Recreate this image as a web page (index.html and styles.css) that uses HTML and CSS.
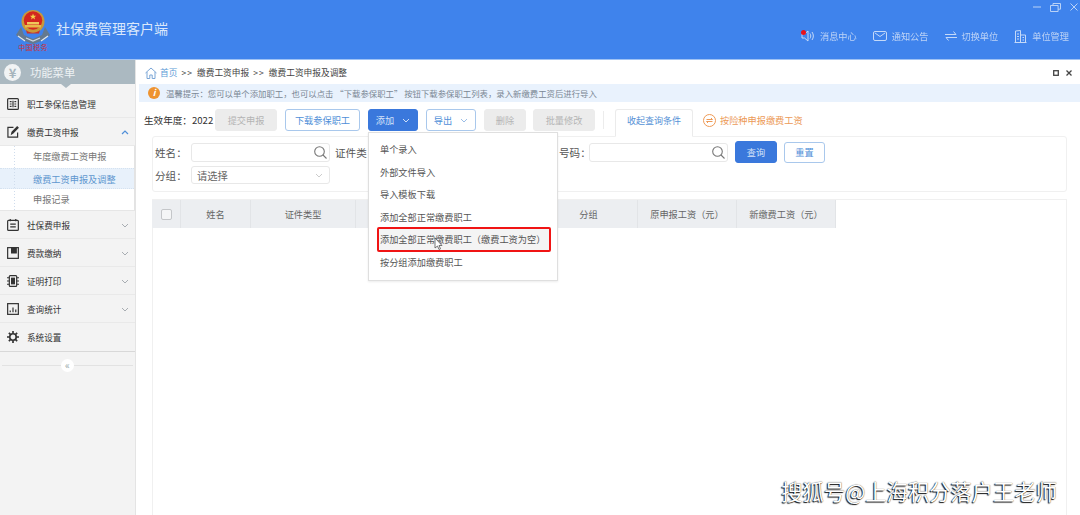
FILE: index.html
```html
<!DOCTYPE html>
<html lang="zh-CN">
<head>
<meta charset="utf-8">
<title>社保费管理客户端</title>
<link rel="stylesheet" href="styles.css">
</head>
<body>
<div class="app">
  <header class="topbar">
    <div class="brand">
      <div class="logo">
        <svg class="emblem" width="36" height="36" viewBox="0 0 36 36">
          <path d="M1 27 L6 19 L9 27 L18 31 L27 27 L30 19 L35 27 L29 32 L18 36 L7 32Z" fill="#64798f"/>
          <path d="M3 28 L10 33 M33 28 L26 33" stroke="#dfe7ef" stroke-width="1.300"/>
          <path d="M11 30l7 3 7-3" stroke="#cfd9e3" fill="none" stroke-width="1.200"/>
          <circle cx="18" cy="13.500" r="11.500" fill="#c9983a"/>
          <circle cx="18" cy="12.500" r="9.200" fill="#d3261f"/>
          <path d="M18 5.500l.9 2.200 2.300.1-1.800 1.400.7 2.200-2.100-1.300-1.900 1.300.6-2.200-1.800-1.400 2.300-.1z" fill="#f4d24a"/>
          <path d="M12 14h12v2.500H12z" fill="#f0c75a"/>
          <path d="M10 17h16v2.500H10z" fill="#e8b94a"/>
          <path d="M11 22c4 3.500 10 3.500 14 0l-1 3.500H12z" fill="#c9322a"/>
        </svg>
        <span class="seal">中国税务</span>
      </div>
      <span class="app-name">社保费管理客户端</span>
    </div>
    <div class="top-right">
      <div class="win-controls">
        <svg width="8" height="8" viewBox="0 0 8 8"><path d="M0 4h8" stroke="#b9d2f7" stroke-width="1"/></svg>
        <svg width="11" height="9" viewBox="0 0 11 9" fill="none" stroke="#b9d2f7"><path d="M.5 2.500h7.600v6H.5zM3 2.500V.5h7.500v5.700H8"/></svg>
        <svg width="8" height="8" viewBox="0 0 8 8"><path d="M.5.500l7 7M7.500 .5l-7 7" stroke="#b9d2f7"/></svg>
      </div>
      <nav class="top-nav">
        <a class="top-link msg">
          <svg width="14" height="14" viewBox="0 0 14 14" fill="none" stroke="#c4d9f8"><path d="M1 5h2.500L7 2v10L3.500 9H1zM9 4.500c1 1.500 1 3.500 0 5M11 3c1.800 2.500 1.800 5.500 0 8"/></svg>
          <i class="dot"></i>
          <span>消息中心</span>
        </a>
        <a class="top-link">
          <svg width="14" height="10" viewBox="0 0 14 10" fill="none" stroke="#c4d9f8"><rect x=".5" y=".5" width="13" height="9" rx="1.500"/><path d="M2 2l5 3.500L12 2"/></svg>
          <span>通知公告</span>
        </a>
        <a class="top-link">
          <svg width="12" height="10" viewBox="0 0 12 10" fill="none" stroke="#c4d9f8"><path d="M0 3.500h11L8.500.5M12 6.500H1L3.500 9.500"/></svg>
          <span>切换单位</span>
        </a>
        <a class="top-link">
          <svg width="13" height="13" viewBox="0 0 13 13" fill="none" stroke="#c4d9f8"><path d="M.5 12.500h12M1.500 12.500V1l5-.500v12M6.500 5h5v7.500M3 4h2M3 6.500h2M3 9h2M8.500 7.500h1.500M8.500 10h1.500"/></svg>
          <span>单位管理</span>
        </a>
      </nav>
    </div>
  </header>

  <div class="body">
    <aside class="sidebar">
      <div class="menu-title">
        <span class="yen">¥</span>
        <span>功能菜单</span>
        <i class="menu-notch"></i>
      </div>
      <ul class="menu">
        <li class="menu-item">
          <svg class="mi" width="12" height="12" viewBox="0 0 13 13" fill="none" stroke="#333" stroke-width="1.300"><rect x=".7" y=".7" width="11.600" height="11.600" rx="1"/><path d="M6.500 3v7M3 4h2M3 6.500h2M3 9h2M8 4h2M8 6.500h2M8 9h2"/></svg>
          <span>职工参保信息管理</span>
        </li>
        <li class="menu-item open">
          <svg class="mi" width="12" height="12" viewBox="0 0 13 13" fill="none" stroke="#333" stroke-width="1.300"><path d="M11.500 7v5H1V1.500h6"/><path d="M5 8.500l.5-2L11 1l1 1-5.500 5.500z" fill="#333"/></svg>
          <span>缴费工资申报</span>
          <svg class="chev up" width="8" height="5" viewBox="0 0 8 5" fill="none" stroke="#4f8fd8" stroke-width="1.200"><path d="M1 4l3-3 3 3"/></svg>
        </li>
        <li class="submenu">
          <div class="sub">年度缴费工资申报</div>
          <div class="sub active">缴费工资申报及调整</div>
          <div class="sub">申报记录</div>
        </li>
        <li class="menu-item">
          <svg class="mi" width="12" height="12" viewBox="0 0 13 13" fill="none" stroke="#333" stroke-width="1.300"><rect x=".7" y="1.500" width="11.600" height="10.800" rx="1"/><path d="M3.500 0v2.500M9.500 0v2.500M3.500 5.500h6M3.500 8.500h6"/></svg>
          <span>社保费申报</span>
          <svg class="chev" width="8" height="5" viewBox="0 0 8 5" fill="none" stroke="#a8adb2"><path d="M1 1l3 3 3-3"/></svg>
        </li>
        <li class="menu-item">
          <svg class="mi" width="12" height="12" viewBox="0 0 13 13" fill="none" stroke="#333" stroke-width="1.300"><rect x=".7" y=".7" width="11.600" height="11.600"/><path d="M5 1v5.500h5V1z" fill="#333"/></svg>
          <span>费款缴纳</span>
          <svg class="chev" width="8" height="5" viewBox="0 0 8 5" fill="none" stroke="#a8adb2"><path d="M1 1l3 3 3-3"/></svg>
        </li>
        <li class="menu-item">
          <svg class="mi" width="12" height="12" viewBox="0 0 13 13" fill="none" stroke="#333" stroke-width="1.300"><rect x="2.500" y=".7" width="8" height="11.600" rx="1"/><rect x="5" y="3.500" width="3" height="6" fill="#333"/><path d="M0 3h2.500M0 6.500h2.500M0 10h2.500M10.500 3H13M10.500 6.500H13M10.500 10H13"/></svg>
          <span>证明打印</span>
          <svg class="chev" width="8" height="5" viewBox="0 0 8 5" fill="none" stroke="#a8adb2"><path d="M1 1l3 3 3-3"/></svg>
        </li>
        <li class="menu-item">
          <svg class="mi" width="12" height="12" viewBox="0 0 13 13" fill="none" stroke="#333" stroke-width="1.300"><rect x=".7" y=".7" width="11.600" height="11.600"/><path d="M3.500 10V8M6.500 10V5M9.500 10V7"/></svg>
          <span>查询统计</span>
          <svg class="chev" width="8" height="5" viewBox="0 0 8 5" fill="none" stroke="#a8adb2"><path d="M1 1l3 3 3-3"/></svg>
        </li>
        <li class="menu-item last">
          <svg class="mi" width="12" height="12" viewBox="0 0 13 13" fill="none" stroke="#333" stroke-width="1.800"><circle cx="6.500" cy="6.500" r="3.500"/><path d="M6.500 0v2.500M6.500 10.500V13M0 6.500h2.500M10.500 6.500H13M2 2l1.800 1.800M9.200 9.200L11 11M11 2L9.200 3.800M3.800 9.200L2 11"/></svg>
          <span>系统设置</span>
        </li>
      </ul>
      <div class="collapse"><span class="collapse-btn">«</span></div>
    </aside>

    <main class="main">
      <div class="crumbs">
        <div class="crumb-path">
          <svg width="12" height="12" viewBox="0 0 12 12" fill="none" stroke="#7ba6d6"><path d="M.5 6L6 1l5.500 5M2 5v6.500h2.800V8h2.400v3.500H10V5"/></svg>
          <span class="crumb-home">首页</span>
          <span class="crumb-sep">&gt;&gt;</span>
          <span>缴费工资申报</span>
          <span class="crumb-sep">&gt;&gt;</span>
          <span>缴费工资申报及调整</span>
        </div>
        <div class="page-controls">
          <svg width="6" height="6" viewBox="0 0 6 6" fill="none" stroke="#444" stroke-width="1.300"><rect x=".7" y=".7" width="4.600" height="4.600"/></svg>
          <svg width="6" height="6" viewBox="0 0 6 6" fill="none" stroke="#444" stroke-width="1.300"><path d="M.5.500l5 5M5.500 .5l-5 5"/></svg>
        </div>
      </div>
      <div class="notice">
        <span class="info">i</span>
        <span>温馨提示：您可以单个添加职工，也可以点击 “下载参保职工” 按钮下载参保职工列表，录入新缴费工资后进行导入</span>
      </div>

      <div class="toolbar">
        <span class="year">生效年度：2022</span>
        <button class="btn disabled w62">提交申报</button>
        <button class="btn outline w75 ml8">下载参保职工</button>
        <button class="btn primary split w50 ml8">添加 <svg width="8" height="5" viewBox="0 0 8 5" fill="none" stroke="#cfe0f8"><path d="M1 1l3 3 3-3"/></svg></button>
        <button class="btn outline split w50 ml8">导出 <svg width="8" height="5" viewBox="0 0 8 5" fill="none" stroke="#9bbde6"><path d="M1 1l3 3 3-3"/></svg></button>
        <button class="btn disabled w42 ml8">删除</button>
        <button class="btn disabled w62 ml7">批量修改</button>
        <i class="tool-divider"></i>
        <div class="tab">收起查询条件</div>
        <div class="tab-link">
          <svg width="13" height="13" viewBox="0 0 13 13" fill="none" stroke="#ee9a56"><circle cx="6.500" cy="6.500" r="6"/><path d="M3.500 5.500h6L8 4M9.500 7.500h-6L5 9"/></svg>
          <span>按险种申报缴费工资</span>
        </div>
      </div>

      <form class="filters">
        <div class="filter-row">
          <label class="f-label name">姓名：</label>
          <div class="input">
            <svg width="13" height="13" viewBox="0 0 13 13" fill="none" stroke="#777" stroke-width="1.100"><circle cx="5.500" cy="5.500" r="4.800"/><path d="M9 9l3.500 3.500"/></svg>
          </div>
          <label class="f-label type">证件类</label>
          <label class="f-label code">号码：</label>
          <div class="input">
            <svg width="13" height="13" viewBox="0 0 13 13" fill="none" stroke="#777" stroke-width="1.100"><circle cx="5.500" cy="5.500" r="4.800"/><path d="M9 9l3.500 3.500"/></svg>
          </div>
          <button type="button" class="btn primary query">查询</button>
          <button type="button" class="btn outline reset">重置</button>
        </div>
        <div class="filter-row second">
          <label class="f-label name">分组：</label>
          <div class="input select">
            <span>请选择</span>
            <svg width="8" height="5" viewBox="0 0 8 5" fill="none" stroke="#ccc"><path d="M1 1l3 3 3-3"/></svg>
          </div>
        </div>
      </form>

      <div class="table-wrap">
        <div class="thead">
          <div class="th"><i class="checkbox"></i></div>
          <div class="th">姓名</div>
          <div class="th">证件类型</div>
          <div class="th"></div>
          <div class="th"></div>
          <div class="th">分组</div>
          <div class="th">原申报工资（元）</div>
          <div class="th">新缴费工资（元）</div>
        </div>
      </div>

      <div class="dropdown">
        <div class="dd-item">单个录入</div>
        <div class="dd-item">外部文件导入</div>
        <div class="dd-item">导入模板下载</div>
        <div class="dd-item">添加全部正常缴费职工</div>
        <div class="dd-item marked">添加全部正常缴费职工（缴费工资为空）
          <svg class="cursor" width="9" height="14" viewBox="0 0 9 14"><path d="M1 1v10l2.500-2 1.500 3.500 1.500-.7L5 8.500h3z" fill="#fff" stroke="#555" stroke-width=".8"/></svg>
        </div>
        <div class="dd-item">按分组添加缴费职工</div>
      </div>
    </main>
  </div>
  <div class="watermark">搜狐号@上海积分落户王老师</div>
</div>
</body>
</html>
```
FILE: styles.css
```css
* { box-sizing: border-box; }
html, body { margin: 0; padding: 0; height: 100%; overflow: hidden; }
body { font-family: "Noto Sans CJK SC", "Noto Sans", sans-serif; font-size: 9.200px; color: #555; background: #fff; }
.app { position: relative; width: 1080px; height: 515px; overflow: hidden; filter: blur(.4px); }
ul { list-style: none; margin: 0; padding: 0; }
button { font-family: inherit; font-size: 9.200px; cursor: pointer; }

.topbar { height: 60px; background: #3f83ec; display: flex; justify-content: space-between; border-bottom: 1px solid #9fc2f4; }
.brand { display: flex; align-items: flex-start; padding: 8px 0 0 15px; }
.logo { width: 36px; display: flex; flex-direction: column; align-items: center; }
.emblem { display: block; }
.seal { font-size: 7px; line-height: 9px; color: #cf2f35; white-space: nowrap; font-family: "Liberation Serif", "Noto Sans CJK SC", serif; letter-spacing: .4px; }
.app-name { font-size: 14px; line-height: 20px; color: #dbe8fb; margin: 10px 0 0 5px; }
.top-right { display: flex; flex-direction: column; align-items: flex-end; }
.win-controls { display: flex; align-items: center; gap: 9px; height: 11px; margin-right: 2px; padding-top: 1px; margin-top: 1px; }
.top-nav { display: flex; align-items: center; gap: 16px; margin: 17px 11px 0 0; }
.top-link { position: relative; display: flex; align-items: center; gap: 5px; color: #bdd3f6; font-size: 9.200px; line-height: 14px; }
.top-link span { white-space: nowrap; }
.dot { position: absolute; left: 0; top: 1px; width: 5px; height: 5px; border-radius: 50%; background: #e8121c; }

.body { display: flex; height: 455px; }
.sidebar { width: 136px; flex: none; background: #f3f3f3; border-right: 1px solid #e4e4e4; }
.menu-title { position: relative; height: 24px; background: #abb9c1; color: #eef2f4; display: flex; align-items: center; gap: 9px; padding-left: 4px; font-size: 11.300px; }
.yen { width: 17px; height: 17px; border-radius: 50%; background: #f1f3f4; color: #a7b5bd; font-size: 13px; line-height: 17px; text-align: center; font-weight: 700; }
.menu-notch { position: absolute; left: 61px; top: 24px; border: 5px solid transparent; border-top: 4px solid #abb9c1; border-bottom: 0; }
.menu { padding-top: 6px; }
.menu-item { position: relative; height: 28px; display: flex; align-items: center; gap: 8px; padding-left: 7px; color: #333; font-size: 8.600px; border-bottom: 1px solid #e9e9e9; }
.menu-item.last { border-bottom: 1px solid #d8d8d8; height: 29px; }
.mi { flex: none; }
.chev { position: absolute; right: 6px; top: 12px; }
.submenu { background: #fff; height: 65px; border-bottom: 1px solid #e6e6e6; border-right: 1px solid #e3e3e3; background-image: linear-gradient(#cfdcec 50%, transparent 50%); background-size: 1px 3px; background-repeat: repeat-y; background-position: 14px 0; }
.sub { height: 21.500px; line-height: 21px; padding-left: 33px; font-size: 9.200px; color: #777; white-space: nowrap; }
.sub.active { background-color: #e8f1fb; color: #5f97cf; border-top: 1px dotted #d5e2f0; border-bottom: 1px dotted #d5e2f0; background-image: linear-gradient(#cfdcec 50%, transparent 50%); background-size: 1px 3px; background-repeat: repeat-y; background-position: 14px 0; }
.collapse { margin: 6px 2px 0; height: 14px; display: flex; justify-content: center; align-items: center; background: linear-gradient(#e2e2e2, #e2e2e2) center/100% 1px no-repeat; }
.collapse-btn { width: 13px; height: 13px; border-radius: 50%; background: #fff; color: #9aa; font-size: 10px; line-height: 11px; text-align: center; }

.main { position: relative; flex: 1; min-width: 0; background: #fff; }
.crumbs { height: 24px; display: flex; align-items: center; justify-content: space-between; padding: 1px 8px 0 9px; font-size: 8.700px; color: #444; }
.crumb-path { display: flex; align-items: center; gap: 3px; }
.crumb-home { color: #5c9bd6; }
.crumb-sep { margin: 0 1px; letter-spacing: 1px; }
.page-controls { display: flex; align-items: center; gap: 7px; }
.notice { height: 18px; margin-left: 3px; background: #e9f2fd; display: flex; align-items: center; gap: 6px; padding-left: 9px; font-size: 8.400px; color: #7a8794; white-space: nowrap; }
.info { width: 12px; height: 12px; border-radius: 50%; background: #ee9330; color: #fff; font-size: 9px; font-style: italic; line-height: 12px; text-align: center; font-weight: 700; }

.toolbar { position: relative; display: flex; align-items: flex-start; height: 34px; padding: 7px 0 0 8px; z-index: 2; }
.year { width: 71px; font-size: 9.600px; line-height: 22px; color: #333; white-space: nowrap; }
.btn { height: 22px; padding: 0; border-radius: 3px; border: 1px solid transparent; white-space: nowrap; display: inline-flex; align-items: center; justify-content: center; }
.btn.disabled { background: #ececec; color: #b4b4b4; border-color: #ececec; }
.btn.outline { background: #fff; color: #4f8fd8; border-color: #a9c8ec; }
.btn.primary { background: #3a78dc; color: #d5e3f9; border-color: #3a78dc; }
.split { gap: 8px; }
.w42 { width: 42px; } .w50 { width: 50px; } .w62 { width: 62px; } .w75 { width: 75px; }
.ml7 { margin-left: 7px; } .ml8 { margin-left: 8px; }
.tool-divider { width: 1px; height: 18px; margin: 2px 11px 0 8px; background: #ececec; }
.tab { width: 78px; height: 28px; background: #fff; border: 1px solid #ebebeb; border-bottom-color: #fff; border-radius: 3px 3px 0 0; color: #5591d6; text-align: center; line-height: 21px; font-size: 9px; position: relative; z-index: 1; }
.tab-link { display: flex; align-items: center; gap: 4px; height: 22px; margin-left: 10px; color: #ec9a58; white-space: nowrap; }

.filters { width: 915px; height: 56px; margin: 0 0 7px 16px; padding: 4px 0 0 2px; border: 1px solid #f0f0f0; border-radius: 3px; }
.filter-row { display: flex; align-items: center; height: 22px; }
.filter-row.second { margin-top: 3px; height: 18px; }
.f-label { font-size: 10.600px; color: #555; white-space: nowrap; }
.name { width: 36px; }
.type { width: 229px; padding-left: 5px; }
.code { width: 30px; }
.input { width: 139px; height: 19px; border: 1px solid #e8e8e8; border-radius: 3px; display: flex; align-items: center; justify-content: flex-end; padding-right: 2px; background: #fff; }
.select { justify-content: space-between; padding: 0 6px 0 5px; color: #666; font-size: 10.300px; height: 18px; }
.query { width: 42px; margin-left: 7px; }
.reset { width: 41px; margin-left: 7px; height: 21px; }

.table-wrap { width: 915px; height: 320px; margin-left: 16px; border: 1px solid #f0f0f0; border-bottom: 0; }
.thead { display: grid; grid-template-columns: 29px 70px 105px 96px 88px 98px 99px 99px; width: 684px; height: 28px; margin-left: -1px; background: #eceef1; }
.th { display: flex; align-items: center; justify-content: center; font-size: 9.200px; color: #666; border-right: 1px solid #e2e4e7; white-space: nowrap; }
.checkbox { width: 11px; height: 11px; border: 1px solid #c4c6c9; border-radius: 2px; background: #f4f5f6; }

.dropdown { position: absolute; left: 232px; top: 72px; width: 190px; height: 149px; padding: 5px 0; background: #fff; border: 1px solid #dfdfdf; box-shadow: 0 1px 2px rgba(0,0,0,.08); z-index: 3; }
.dd-item { position: relative; height: 22.600px; line-height: 22px; padding-left: 11px; font-size: 9.200px; color: #555; white-space: nowrap; }
.marked { outline: 2px solid #f01414; outline-offset: -1px; border-radius: 1px; margin: 0 7px 0 9px; padding-left: 2px; background: #f4f4f4; }
.cursor { position: absolute; left: 56px; top: 9px; }

.watermark { position: absolute; right: 23px; top: 477px; font-size: 21.300px; line-height: 28px; color: #fff; white-space: nowrap; text-shadow: -1px 1px 1px #111, 0 0 1px #333; }
```
